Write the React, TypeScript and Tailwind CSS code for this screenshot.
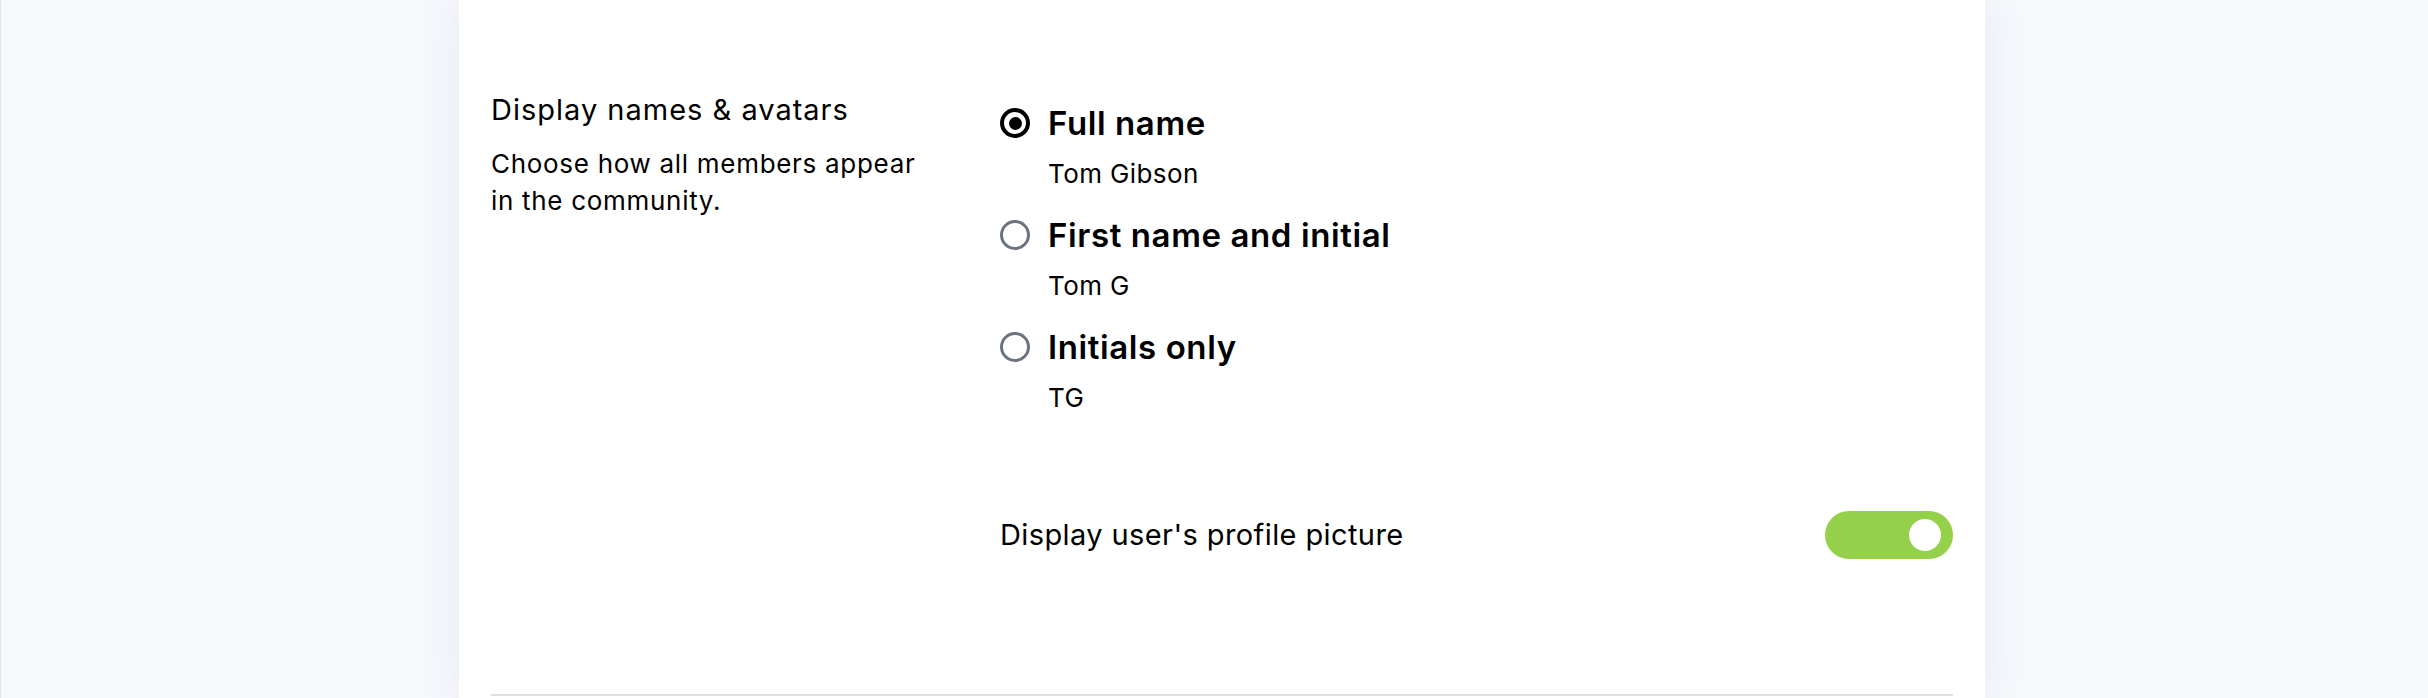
import { useState } from 'react';

const options = [
  { id: 'full', label: 'Full name', example: 'Tom Gibson' },
  { id: 'first', label: 'First name and initial', example: 'Tom G' },
  { id: 'initials', label: 'Initials only', example: 'TG' }
];

const Radio = ({ checked }: { checked: boolean }) =>
  checked ? (
    <span className="flex h-[30px] w-[30px] shrink-0 items-center justify-center rounded-full border-[4px] border-black">
      <span className="h-[13px] w-[13px] rounded-full bg-black" />
    </span>
  ) : (
    <span className="h-[30px] w-[30px] shrink-0 rounded-full border-[3px] border-[#6b7280]" />
  );

export default function App() {
  const [selected, setSelected] = useState('full');
  const [showAvatar, setShowAvatar] = useState(true);

  return (
    <div
      className="flex h-[698px] overflow-hidden border-l border-[#e2e5ea] bg-[#f7f8fc] text-black"
      style={{ fontFamily: 'Inter, "Open Sans", sans-serif' }}
    >
      <div className="ml-[458px] w-[1526px] shrink-0 bg-white px-8 pt-[92px] shadow-[0_0_40px_rgba(70,90,180,0.09)]">
        <div className="flex">
          {/* label column */}
          <div className="w-[509px] shrink-0">
            <h3 className="text-[29px] leading-[36px] font-normal tracking-[1px]">Display names &amp; avatars</h3>
            <p className="mt-[17px] w-[440px] text-[26px] leading-[37px] tracking-[0.7px]">
              Choose how all members appear in the community.
            </p>
          </div>

          <div className="flex-1">
            <div className="flex flex-col gap-[23px] pt-[11px]">
              {options.map((opt) => (
                <button
                  key={opt.id}
                  onClick={() => setSelected(opt.id)}
                  className="flex flex-col items-start text-left"
                >
                  <div className="flex h-[40px] items-center gap-[18px]">
                    <Radio checked={selected === opt.id} />
                    <span className="text-[33px] leading-[40px] font-semibold tracking-[0.6px]">{opt.label}</span>
                  </div>
                  <span className="mt-[13px] pl-[48px] text-[26px] leading-[36px] tracking-[0.4px]">
                    {opt.example}
                  </span>
                </button>
              ))}
            </div>

            <div className="mt-[95px] flex h-[48px] items-center justify-between">
              <span className="text-[29px] leading-[48px] tracking-[0.4px]">Display user's profile picture</span>
              <button
                onClick={() => setShowAvatar(!showAvatar)}
                className={`flex h-[48px] w-[128px] items-center rounded-full px-[12px] ${
                  showAvatar ? 'justify-end bg-[#95d04b]' : 'justify-start bg-[#d1d5db]'
                }`}
              >
                <span className="h-[32px] w-[32px] rounded-full bg-white" />
              </button>
            </div>
          </div>
        </div>

        <div className="mt-[135px] h-[2px] bg-[#dcdfe4]" />
      </div>
    </div>
  );
}
